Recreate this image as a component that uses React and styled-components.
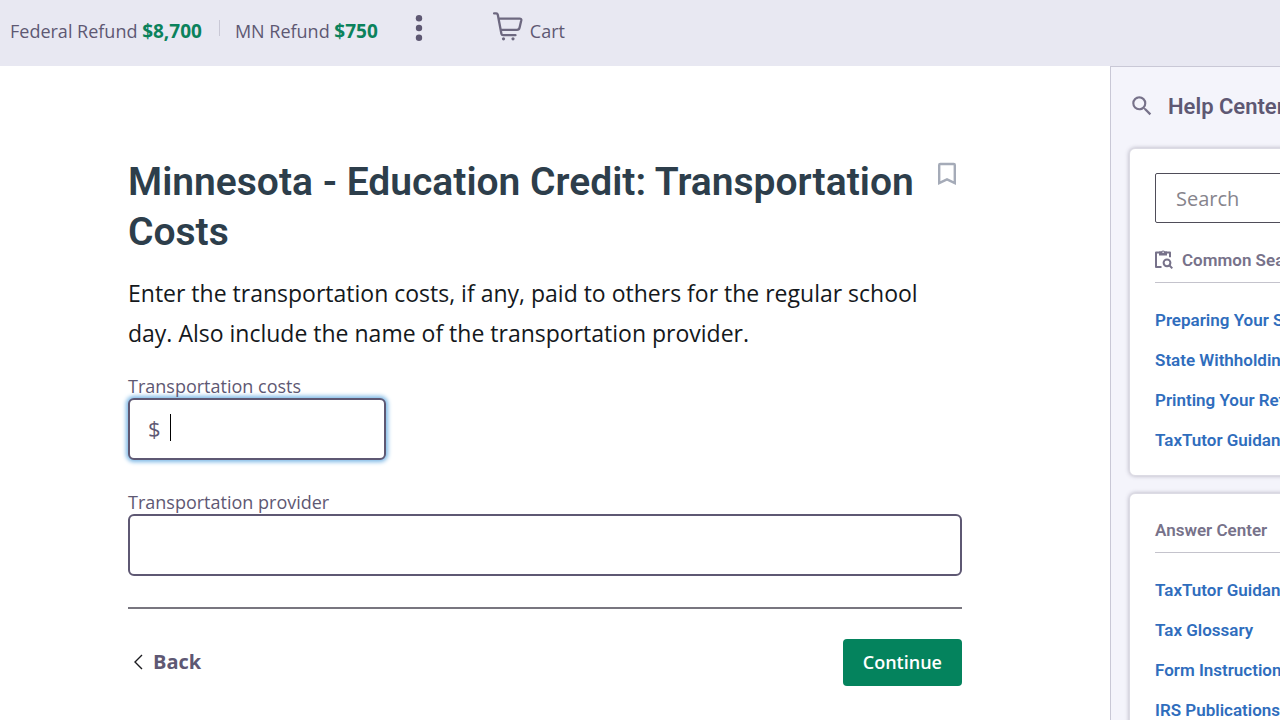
import React from 'react';
import styled, { createGlobalStyle, css } from 'styled-components';
import { MdSearch } from 'react-icons/md';

const GlobalStyle = createGlobalStyle`
  * {
    box-sizing: border-box;
  }
  body {
    margin: 0;
    background: #fff;
    color: #5e5873;
    font-family: 'Open Sans', 'Noto Sans', sans-serif;
  }
`;

const headingFont = css`
  font-family: Roboto, 'Liberation Sans', sans-serif;
`;

const Page = styled.div`
  display: flex;
  flex-direction: column;
  height: 100vh;
  overflow: hidden;
`;

const TopBar = styled.header`
  display: flex;
  align-items: center;
  flex: none;
  height: 66px;
  padding: 0 10px 4px;
  background: #e8e8f2;
  font-size: 18px;
  line-height: 24px;
`;

const Refund = styled.span`
  white-space: nowrap;
`;

const Amount = styled.strong`
  color: #0b825c;
  font-size: 19px;
  font-weight: 700;
`;

const Divider = styled.span`
  width: 1px;
  height: 16px;
  margin: 0 15px 6px 17px;
  background: #c9c8d6;
`;

const MoreButton = styled.button`
  display: flex;
  align-items: center;
  justify-content: center;
  width: 30px;
  height: 40px;
  margin: 0 59px 6px 26px;
  padding: 0;
  border: 0;
  background: none;
  color: #5e5873;
`;

const CartLink = styled.a`
  display: flex;
  align-items: center;
  gap: 7px;
  color: #5e5873;
  text-decoration: none;

  svg {
    margin-bottom: 10px;
  }
`;

const Body = styled.div`
  display: flex;
  flex: 1;
  min-height: 0;
`;

const Main = styled.main`
  flex: 1;
  min-width: 0;
  padding: 91px 148px 30px 128px;
`;

const TitleRow = styled.div`
  display: flex;
  align-items: flex-start;
  justify-content: space-between;
`;

const Title = styled.h1`
  ${headingFont}
  margin: 0;
  color: #2d3e4b;
  font-size: 39px;
  font-weight: 600;
  line-height: 50px;
`;

const BookmarkButton = styled.button`
  flex: none;
  margin: 5px 5px 0 0;
  padding: 0;
  border: 0;
  background: none;
  line-height: 0;
`;

const Intro = styled.p`
  margin: 16px 0 21px;
  color: #14181c;
  font-size: 23px;
  line-height: 40px;
`;

const Field = styled.div`
  & + & {
    margin-top: 30px;
  }
`;

const Label = styled.label`
  display: block;
  font-size: 18px;
  line-height: 24px;
`;

const InputBox = styled.div`
  display: flex;
  align-items: center;
  width: ${(props) => (props.$short ? '258px' : '100%')};
  height: 62px;
  padding: 0 18px 3px;
  border: 2px solid #5e5873;
  border-radius: 6px;
  background: #fff;
  font-size: 22px;
  ${(props) => props.$focused && 'box-shadow: 0 0 4px 2px #7db8e6;'}
`;

const Caret = styled.span`
  width: 1px;
  height: 27px;
  margin-left: 9px;
  background: #000;
`;

const TextInput = styled.input`
  flex: 1;
  min-width: 0;
  height: 100%;
  padding: 0;
  border: 0;
  outline: 0;
  background: none;
  color: #14181c;
  font: inherit;
  caret-color: transparent;
`;

const Actions = styled.div`
  display: flex;
  align-items: center;
  justify-content: space-between;
  margin-top: 31px;
  padding-top: 30px;
  border-top: 2px solid #78767f;
`;

const BackButton = styled.button`
  display: flex;
  align-items: center;
  gap: 10px;
  padding: 0 6px 2px;
  border: 0;
  background: none;
  color: #5e5873;
  font: inherit;
  font-size: 20px;
  font-weight: 700;
`;

const ContinueButton = styled.button`
  height: 47px;
  padding: 0 20px 2px;
  border: 0;
  border-radius: 4px;
  background: #04835d;
  color: #fff;
  font: inherit;
  font-size: 18px;
  font-weight: 600;
`;

const Sidebar = styled.aside`
  flex: 0 0 170px;
  overflow: hidden;
  padding-left: 18px;
  border-top: 1px solid #c9c8d6;
  border-left: 1px solid #c9c8d6;
  background: #f4f4fb;
  white-space: nowrap;
`;

const SidebarTitle = styled.h2`
  ${headingFont}
  display: flex;
  align-items: center;
  gap: 13px;
  height: 81px;
  margin: 0;
  padding-bottom: 3px;
  font-size: 22px;
  font-weight: 600;

  svg {
    flex: none;
  }
`;

const Card = styled.section`
  ${headingFont}
  width: 320px;
  margin-bottom: 17px;
  padding: 24px 25px 15px;
  border: 1px solid #dcdbe4;
  border-radius: 6px;
  background: #fff;
  box-shadow: 0 0 4px rgba(60, 55, 80, 0.35);
`;

const SearchInput = styled.input`
  display: block;
  width: 100%;
  height: 50px;
  margin-bottom: 25px;
  padding: 0 20px;
  border: 1px solid #4f4d59;
  border-radius: 2px;
  font-family: 'Open Sans', 'Noto Sans', sans-serif;
  font-size: 20px;

  &::placeholder {
    color: #86848c;
    opacity: 1;
  }
`;

const CardTitle = styled.h3`
  display: flex;
  align-items: center;
  gap: 9px;
  margin: 0 0 17px;
  padding-bottom: 10px;
  border-bottom: 1px solid #c4c3cc;
  color: #77728a;
  font-size: 17px;
  font-weight: 600;
  line-height: 24px;
`;

const LinkList = styled.ul`
  margin: 0;
  padding: 0;
  list-style: none;
`;

const HelpLink = styled.a`
  color: #2f6dbd;
  font-size: 17px;
  font-weight: 600;
  line-height: 40px;
  text-decoration: none;
`;

const commonSearches = [
  'Preparing Your State Return',
  'State Withholding',
  'Printing Your Return',
  'TaxTutor Guidance',
];

const answerLinks = [
  'TaxTutor Guidance',
  'Tax Glossary',
  'Form Instructions',
  'IRS Publications',
];

const CartIcon = () => (
  <svg width="30" height="29" viewBox="0 0 30 29" fill="none" stroke="#6d6880">
    <path
      d="M1 1.4h2.2q1.3 0 1.6 1.3l3.6 19q.3 1.5 1.8 1.5h12.3M5.6 6.6h21q2 0 1.7 1.6l-1.7 7.4q-.5 2.3-2.6 2.3H7.6"
      strokeWidth="2.3"
      strokeLinecap="round"
      strokeLinejoin="round"
    />
    <circle cx="10.5" cy="26.8" r="1.6" fill="#6d6880" stroke="none" />
    <circle cx="20" cy="26.8" r="1.6" fill="#6d6880" stroke="none" />
  </svg>
);

const DotsIcon = () => (
  <svg width="8" height="28" viewBox="0 0 8 28" fill="currentColor">
    <circle cx="4" cy="4.3" r="3.2" />
    <circle cx="4" cy="14" r="3.2" />
    <circle cx="4" cy="23.7" r="3.2" />
  </svg>
);

const BookmarkIcon = () => (
  <svg width="20" height="24" viewBox="0 0 20 24" fill="none" stroke="#a5abb8">
    <path
      d="M2.2 21.2V3q0-1 1-1h13.6q1 0 1 1v18.2L10 17.4z"
      strokeWidth="2.4"
      strokeLinejoin="miter"
    />
  </svg>
);

const ClipboardIcon = () => (
  <svg width="18" height="20" viewBox="0 0 18 20" fill="none" stroke="#77728a">
    <path d="M6.5 17H1V2.4h14v4.8" strokeWidth="2" strokeLinejoin="round" />
    <path
      d="M4 1.6h2.3a2 2 0 0 1 3.6 0H12v4H4z"
      fill="#77728a"
      stroke="none"
    />
    <circle cx="8.1" cy="2.3" r=".8" fill="#fff" stroke="none" />
    <circle cx="12" cy="12.8" r="3.4" strokeWidth="2" />
    <path d="M14.3 15.2l3 3.2" strokeWidth="2" />
  </svg>
);

const ChevronIcon = () => (
  <svg width="9" height="16" viewBox="0 0 9 16" fill="none" stroke="#1b1b1f">
    <path d="M8 1L1 8l7 7" strokeWidth="1.4" />
  </svg>
);

const Links = ({ items }) => (
  <LinkList>
    {items.map((item) => (
      <li key={item}>
        <HelpLink href="#help">{item}</HelpLink>
      </li>
    ))}
  </LinkList>
);

function App() {
  return (
    <Page>
      <GlobalStyle />
      <TopBar>
        <Refund>
          Federal Refund <Amount>$8,700</Amount>
        </Refund>
        <Divider />
        <Refund>
          MN Refund <Amount>$750</Amount>
        </Refund>
        <MoreButton type="button" aria-label="More">
          <DotsIcon />
        </MoreButton>
        <CartLink href="#cart">
          <CartIcon />
          Cart
        </CartLink>
      </TopBar>
      <Body>
        <Main>
          <TitleRow>
            <Title>Minnesota - Education Credit: Transportation Costs</Title>
            <BookmarkButton type="button" aria-label="Bookmark">
              <BookmarkIcon />
            </BookmarkButton>
          </TitleRow>
          <Intro>
            Enter the transportation costs, if any, paid to others for the
            regular school day. Also include the name of the transportation
            provider.
          </Intro>
          <Field>
            <Label htmlFor="costs">Transportation costs</Label>
            <InputBox $short $focused>
              $
              <Caret />
              <TextInput id="costs" type="text" inputMode="decimal" />
            </InputBox>
          </Field>
          <Field>
            <Label htmlFor="provider">Transportation provider</Label>
            <InputBox>
              <TextInput id="provider" type="text" />
            </InputBox>
          </Field>
          <Actions>
            <BackButton type="button">
              <ChevronIcon />
              Back
            </BackButton>
            <ContinueButton type="button">Continue</ContinueButton>
          </Actions>
        </Main>
        <Sidebar>
          <SidebarTitle>
            <MdSearch size={26} color="#77728a" />
            Help Center
          </SidebarTitle>
          <Card>
            <SearchInput type="search" placeholder="Search" aria-label="Search" />
            <CardTitle>
              <ClipboardIcon />
              Common Searches
            </CardTitle>
            <Links items={commonSearches} />
          </Card>
          <Card>
            <CardTitle>Answer Center</CardTitle>
            <Links items={answerLinks} />
          </Card>
        </Sidebar>
      </Body>
    </Page>
  );
}

export default App;
